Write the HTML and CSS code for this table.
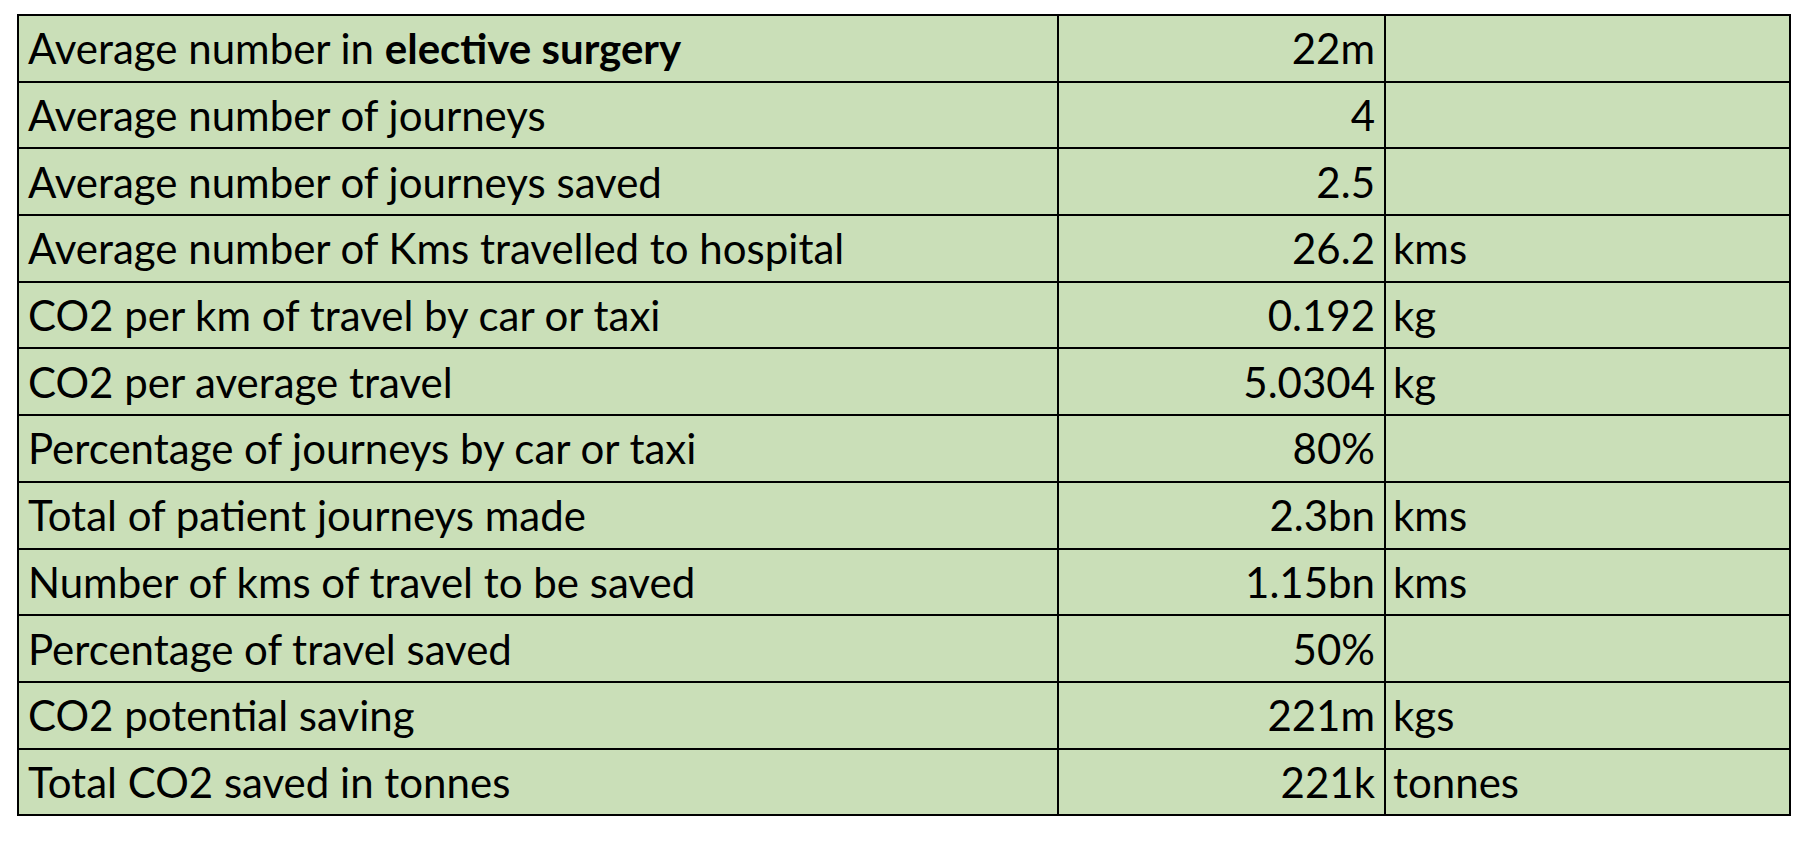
FILE: index.html
```html
<!DOCTYPE html>
<html>
<head>
<meta charset="utf-8">
<link rel="stylesheet" href="styles.css">
</head>
<body>
<table class="data">
  <colgroup><col class="c1"><col class="c2"><col class="c3"></colgroup>
  <tr><td>Average number in <b>elective surgery</b></td><td class="num">22m</td><td class="unit"></td></tr>
  <tr><td>Average number of journeys</td><td class="num">4</td><td class="unit"></td></tr>
  <tr><td>Average number of journeys saved</td><td class="num">2.5</td><td class="unit"></td></tr>
  <tr><td>Average number of Kms travelled to hospital</td><td class="num">26.2</td><td class="unit">kms</td></tr>
  <tr><td>CO2 per km of travel by car or taxi</td><td class="num">0.192</td><td class="unit">kg</td></tr>
  <tr><td>CO2 per average travel</td><td class="num">5.0304</td><td class="unit">kg</td></tr>
  <tr><td>Percentage of journeys by car or taxi</td><td class="num">80%</td><td class="unit"></td></tr>
  <tr><td>Total of patient journeys made</td><td class="num">2.3bn</td><td class="unit">kms</td></tr>
  <tr><td>Number of kms of travel to be saved</td><td class="num">1.15bn</td><td class="unit">kms</td></tr>
  <tr><td>Percentage of travel saved</td><td class="num">50%</td><td class="unit"></td></tr>
  <tr><td>CO2 potential saving</td><td class="num">221m</td><td class="unit">kgs</td></tr>
  <tr><td>Total CO2 saved in tonnes</td><td class="num">221k</td><td class="unit">tonnes</td></tr>
</table>
</body>
</html>
```
FILE: styles.css
```css
html, body { margin: 0; padding: 0; background: #ffffff; }
body { padding: 14px 0 0 17px; font-family: "Lato", "Open Sans", sans-serif; color: #000; }
.data { border-collapse: collapse; table-layout: fixed; width: 1772px; background: #cadfb8; }
.c1 { width: 1040px; }
.c2 { width: 327px; }
.c3 { width: 405px; }
.data td { border: 2px solid #000; height: 64.7px; padding: 0 8px 0 9px; font-size: 42px; line-height: 1; vertical-align: middle; white-space: nowrap; }
.data td.num { text-align: right; padding-right: 9px; }
.data td.unit { padding-left: 7px; }
.data b { font-weight: 700; }
```
